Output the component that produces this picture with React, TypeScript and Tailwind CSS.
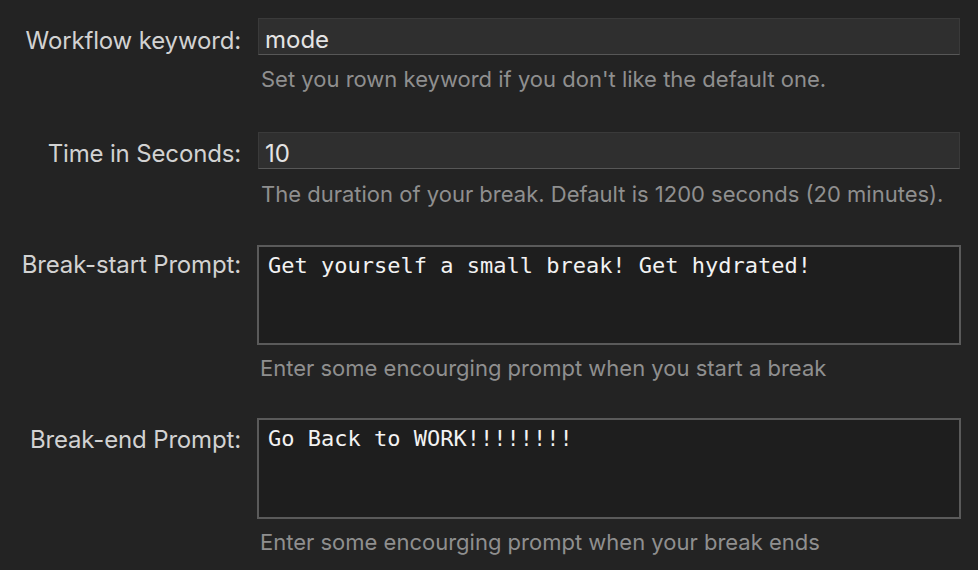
import React from "react";

const sans = "font-['Inter','Noto_Sans',sans-serif]";

function Label({ text, pt }: { text: string; pt: string }) {
  return (
    <div
      className={`w-[241px] shrink-0 text-right text-[24px] leading-[29px] tracking-[-0.15px] text-[#d2d2d2] ${sans} ${pt}`}
    >
      {text}
    </div>
  );
}

function Desc({ text, mt }: { text: string; mt: string }) {
  return (
    <div className={`text-[22px] leading-[26px] text-[#8f8f8f] pl-[3px] ${sans} ${mt}`}>
      {text}
    </div>
  );
}

export default function App() {
  return (
    <div className="w-[978px] h-[570px] bg-[#232323] overflow-hidden pt-[18px]">
      {/* Row 1 */}
      <div className="flex items-start">
        <Label text="Workflow keyword:" pt="pt-[8px]" />
        <div className="ml-[17px] w-[702px]">
          <div className="h-[37px] bg-[#2f2f2f] border border-[#3a3a3a] border-b-[#575757] pl-[6px] pt-[6px]">
            <div className={`text-[24px] leading-[29px] text-[#e4e4e4] ${sans}`}>mode</div>
          </div>
          <Desc text="Set you rown keyword if you don't like the default one." mt="mt-[11px]" />
        </div>
      </div>

      {/* Row 2 */}
      <div className="flex items-start mt-[40px]">
        <Label text="Time in Seconds:" pt="pt-[7px]" />
        <div className="ml-[17px] w-[702px]">
          <div className="h-[37px] bg-[#2f2f2f] border border-[#3a3a3a] border-b-[#575757] pl-[6px] pt-[6px]">
            <div className={`text-[24px] leading-[29px] text-[#e4e4e4] ${sans}`}>10</div>
          </div>
          <Desc
            text="The duration of your break. Default is 1200 seconds (20 minutes)."
            mt="mt-[12px]"
          />
        </div>
      </div>

      {/* Row 3 */}
      <div className="flex items-start mt-[38px]">
        <Label text="Break-start Prompt:" pt="pt-[5px]" />
        <div className="ml-[16px] w-[704px]">
          <div className="h-[100px] bg-[#1e1e1e] border-2 border-[#5a5a5a] pl-[9px] pt-[6px]">
            <div className="font-['DejaVu_Sans_Mono','Liberation_Mono',monospace] text-[22px] leading-[26px] text-[#f2f2f2]">
              Get yourself a small break! Get hydrated!
            </div>
          </div>
          <Desc text="Enter some encourging prompt when you start a break" mt="mt-[10px]" />
        </div>
      </div>

      {/* Row 4 */}
      <div className="flex items-start mt-[37px]">
        <Label text="Break-end Prompt:" pt="pt-[7px]" />
        <div className="ml-[16px] w-[704px]">
          <div className="h-[101px] bg-[#1e1e1e] border-2 border-[#5a5a5a] pl-[9px] pt-[6px]">
            <div className="font-['DejaVu_Sans_Mono','Liberation_Mono',monospace] text-[22px] leading-[26px] text-[#f2f2f2]">
              Go Back to WORK!!!!!!!!
            </div>
          </div>
          <Desc text="Enter some encourging prompt when your break ends" mt="mt-[10px]" />
        </div>
      </div>
    </div>
  );
}
